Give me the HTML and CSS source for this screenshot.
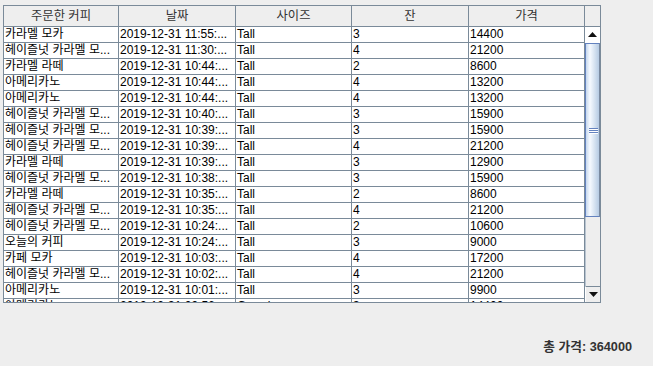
FILE: index.html
```html
<!DOCTYPE html>
<html lang="ko">
<head>
<meta charset="utf-8">
<title>주문 내역</title>
<link rel="stylesheet" href="styles.css">
</head>
<body>
<div class="window">
  <div class="pane">
    <div class="table">
      <div class="thead">
        <div class="th">주문한 커피</div>
        <div class="th">날짜</div>
        <div class="th">사이즈</div>
        <div class="th">잔</div>
        <div class="th">가격</div>
      </div>
      <div class="tbody">
        <div class="tr"><div class="td">카라멜 모카</div><div class="td">2019-12-31 11:55:...</div><div class="td">Tall</div><div class="td">3</div><div class="td">14400</div></div>
        <div class="tr"><div class="td">헤이즐넛 카라멜 모...</div><div class="td">2019-12-31 11:30:...</div><div class="td">Tall</div><div class="td">4</div><div class="td">21200</div></div>
        <div class="tr"><div class="td">카라멜 라떼</div><div class="td">2019-12-31 10:44:...</div><div class="td">Tall</div><div class="td">2</div><div class="td">8600</div></div>
        <div class="tr"><div class="td">아메리카노</div><div class="td">2019-12-31 10:44:...</div><div class="td">Tall</div><div class="td">4</div><div class="td">13200</div></div>
        <div class="tr"><div class="td">아메리카노</div><div class="td">2019-12-31 10:44:...</div><div class="td">Tall</div><div class="td">4</div><div class="td">13200</div></div>
        <div class="tr"><div class="td">헤이즐넛 카라멜 모...</div><div class="td">2019-12-31 10:40:...</div><div class="td">Tall</div><div class="td">3</div><div class="td">15900</div></div>
        <div class="tr"><div class="td">헤이즐넛 카라멜 모...</div><div class="td">2019-12-31 10:39:...</div><div class="td">Tall</div><div class="td">3</div><div class="td">15900</div></div>
        <div class="tr"><div class="td">헤이즐넛 카라멜 모...</div><div class="td">2019-12-31 10:39:...</div><div class="td">Tall</div><div class="td">4</div><div class="td">21200</div></div>
        <div class="tr"><div class="td">카라멜 라떼</div><div class="td">2019-12-31 10:39:...</div><div class="td">Tall</div><div class="td">3</div><div class="td">12900</div></div>
        <div class="tr"><div class="td">헤이즐넛 카라멜 모...</div><div class="td">2019-12-31 10:38:...</div><div class="td">Tall</div><div class="td">3</div><div class="td">15900</div></div>
        <div class="tr"><div class="td">카라멜 라떼</div><div class="td">2019-12-31 10:35:...</div><div class="td">Tall</div><div class="td">2</div><div class="td">8600</div></div>
        <div class="tr"><div class="td">헤이즐넛 카라멜 모...</div><div class="td">2019-12-31 10:35:...</div><div class="td">Tall</div><div class="td">4</div><div class="td">21200</div></div>
        <div class="tr"><div class="td">헤이즐넛 카라멜 모...</div><div class="td">2019-12-31 10:24:...</div><div class="td">Tall</div><div class="td">2</div><div class="td">10600</div></div>
        <div class="tr"><div class="td">오늘의 커피</div><div class="td">2019-12-31 10:24:...</div><div class="td">Tall</div><div class="td">3</div><div class="td">9000</div></div>
        <div class="tr"><div class="td">카페 모카</div><div class="td">2019-12-31 10:03:...</div><div class="td">Tall</div><div class="td">4</div><div class="td">17200</div></div>
        <div class="tr"><div class="td">헤이즐넛 카라멜 모...</div><div class="td">2019-12-31 10:02:...</div><div class="td">Tall</div><div class="td">4</div><div class="td">21200</div></div>
        <div class="tr"><div class="td">아메리카노</div><div class="td">2019-12-31 10:01:...</div><div class="td">Tall</div><div class="td">3</div><div class="td">9900</div></div>
        <div class="tr"><div class="td">아메리카노</div><div class="td">2019-12-31 09:56:...</div><div class="td">Grande</div><div class="td">3</div><div class="td">14400</div></div>
      </div>
    </div>
    <div class="vbar">
      <div class="corner"></div>
      <div class="btn"><svg width="9" height="5" viewBox="0 0 9 5"><path d="M4.5 0 L9 5 L0 5 Z" fill="#111"/></svg></div>
      <div class="track">
        <div class="thumb"><div class="grip"><span></span><span></span><span></span></div></div>
      </div>
      <div class="btn down"><svg width="9" height="5" viewBox="0 0 9 5"><path d="M0 0 L9 0 L4.5 5 Z" fill="#111"/></svg></div>
    </div>
  </div>
  <div class="footer">총 가격: 364000</div>
</div>
</body>
</html>
```

FILE: styles.css
```css
html, body {
  margin: 0;
  padding: 0;
  background: #eeeeee;
}

body {
  font-family: "Liberation Sans", "Noto Sans CJK KR", sans-serif;
  font-size: 12px;
  color: #000;
}

.window {
  padding: 5px 0 0 3px;
}

.pane {
  display: flex;
  width: 598px;
  height: 298px;
  box-sizing: border-box;
  border: 1px solid #7a8a99;
  background: #ffffff;
}

.table {
  width: 581px;
  display: flex;
  flex-direction: column;
  overflow: hidden;
}

.thead,
.tr {
  display: grid;
  grid-template-columns: 115px 117px 116px 117px 116px;
}

.thead {
  height: 21px;
  box-sizing: border-box;
  border-bottom: 1px solid #7a8a99;
  background: #eeeeee;
}

.th {
  border-right: 1px solid #7a8a99;
  text-align: center;
  line-height: 20px;
  font-size: 12.3px;
  color: #333;
  white-space: nowrap;
  overflow: hidden;
}

.tbody {
  flex: 1;
  overflow: hidden;
}

.tr {
  height: 16px;
  box-sizing: border-box;
  border-bottom: 1px solid #7a8a99;
}

.td {
  border-right: 1px solid #7a8a99;
  padding-left: 1px;
  line-height: 15px;
  white-space: nowrap;
  overflow: hidden;
}

.vbar {
  width: 15px;
  display: flex;
  flex-direction: column;
  background: #eeeeee;
}

.corner {
  height: 21px;
  box-sizing: border-box;
  border-bottom: 1px solid #7a8a99;
  background: #eeeeee;
  flex: none;
}

.btn {
  height: 16px;
  flex: none;
  box-sizing: border-box;
  background: #ffffff;
  display: flex;
  align-items: center;
  justify-content: center;
  padding-bottom: 1px;
}

.btn.down {
  background: #eeeeee;
  border-top: 1px solid #7a8a99;
  border-left: 1px solid #ffffff;
  padding-bottom: 0;
}

.track {
  flex: 1;
  background: #eeeeee;
  border-left: 1px solid #b8c4d0;
}

.thumb {
  height: 174px;
  box-sizing: border-box;
  border: 1px solid #6382bf;
  border-right-color: #7a8aa0;
  margin-left: -1px;
  background: linear-gradient(to right, #c6d8ee 0%, #f6faff 30%, #e0eaf5 55%, #b6cbe3 100%);
  display: flex;
  align-items: center;
  justify-content: center;
}

.grip {
  display: flex;
  flex-direction: column;
  gap: 1px;
  width: 9px;
  padding-left: 1px;
}

.grip span {
  display: block;
  height: 1px;
  background: #6382bf;
  box-shadow: 0 1px 0 #ffffff;
}

.footer {
  margin-top: 37px;
  padding-right: 21px;
  text-align: right;
  font-weight: bold;
  font-size: 12.7px;
  color: #333;
  line-height: 15px;
}
```
